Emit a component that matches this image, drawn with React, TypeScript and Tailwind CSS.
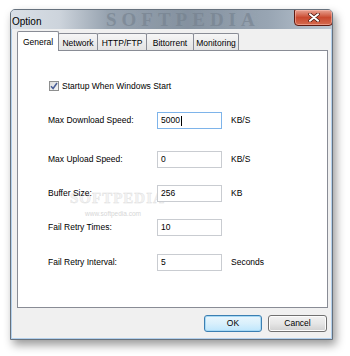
import React from "react";

const font = { fontFamily: '"Liberation Sans", Arial, sans-serif' };

function Tab({ label, active, w }: { label: string; active?: boolean; w: string }) {
  if (active) {
    return (
      <div
        className={`${w} h-[20px] -mb-[1px] relative z-10 flex items-start justify-center pt-[4px] border border-b-0 border-[#898c95] bg-white text-[8.5px] text-black rounded-t-[2px]`}
      >
        {label}
      </div>
    );
  }
  return (
    <div
      className={`${w} h-[17px] -ml-[1px] flex items-start justify-center pt-[3px] border border-b-0 border-[#898c95] bg-gradient-to-b from-[#f6f6f6] to-[#e3e3e3] text-[8.5px] text-black rounded-t-[2px]`}
    >
      {label}
    </div>
  );
}

function Field({ value, focused }: { value: string; focused?: boolean }) {
  return (
    <div
      className={`w-[65px] h-[17px] flex items-center pl-[3px] bg-white border text-[8.5px] text-black ${
        focused ? "border-[#7eb4ea]" : "border-[#c9ccd1]"
      }`}
    >
      {value}
      {focused && <span className="inline-block w-[1px] h-[10px] bg-black ml-[1px]" />}
    </div>
  );
}

function Row({ label, value, unit, focused, mt }: { label: string; value: string; unit?: string; focused?: boolean; mt: string }) {
  return (
    <div className={`${mt} relative z-10 flex items-center h-[17px]`}>
      <div className="w-[109px] text-[8.5px] text-black">{label}</div>
      <Field value={value} focused={focused} />
      {unit && <div className="ml-[9px] text-[8.5px] text-black">{unit}</div>}
    </div>
  );
}

function Button({ label, def, w }: { label: string; def?: boolean; w: string }) {
  return (
    <div
      className={`${w} h-[17px] flex items-center justify-center rounded-[3px] border text-[8.5px] text-black ${
        def
          ? "border-[#3c7fb1] bg-gradient-to-b from-[#eaf6fd] via-[#d9f0fc] to-[#bee6fd] shadow-[inset_0_0_0_1px_#a7d9f5]"
          : "border-[#707070] bg-gradient-to-b from-[#f2f2f2] via-[#e6e6e6] to-[#d0d0d0] shadow-[inset_0_0_0_1px_#fcfcfc]"
      }`}
    >
      {label}
    </div>
  );
}

export default function App() {
  return (
    <div className="w-[350px] h-[356px] bg-white pt-[9px] pl-[10px] overflow-hidden" style={font}>
      <div className="relative w-[323px] h-[331px] flex flex-col rounded-t-[5px] border border-[#66717d] bg-[#b3d0ec] shadow-[3px_5px_10px_rgba(0,0,0,0.4)]">
        {/* title bar */}
        <div className="relative h-[19px] flex items-start justify-between rounded-t-[4px] overflow-hidden bg-[linear-gradient(90deg,#d9dfe6_0%,#cdd4dc_15%,#97a3b0_30%,#8592a0_55%,#98a5b3_80%,#bcc7d2_100%)]">
          <div className="absolute left-[95px] top-[0px] leading-none text-[19px] font-bold tracking-[5px] text-[#737f8c] opacity-60 select-none" style={{ fontFamily: '"Liberation Serif", serif' }}>
            SOFTPEDIA
          </div>
          <div className="relative pl-[1px] pt-[4px] text-[10px] text-black">Option</div>
          <div className="relative -mt-[1px] -mr-[1px] w-[39px] h-[17px] flex items-center justify-center rounded-b-[4px] rounded-t-[2px] border border-[#5e1a10] bg-gradient-to-b from-[#e7a292] via-[#c9492f] to-[#d46a4e] shadow-[inset_0_0_0_1px_rgba(255,200,190,0.5)]">
            <svg width="12" height="9" viewBox="0 0 12 9">
              <path d="M2 1.2 L10 7.8 M10 1.2 L2 7.8" stroke="#4a1a12" strokeWidth="3.4" strokeLinecap="round" />
              <path d="M2 1.2 L10 7.8 M10 1.2 L2 7.8" stroke="#ffffff" strokeWidth="2" strokeLinecap="round" />
            </svg>
          </div>
        </div>

        {/* client */}
        <div className="flex-1 mx-[1px] mb-[1px] bg-[#f0f0f0] flex flex-col pt-[2px] pl-[5px] pr-[3px]">
          <div className="h-[19px] flex items-end">
            <Tab label="General" active w="w-[42px]" />
            <Tab label="Network" w="w-[40px]" />
            <Tab label="HTTP/FTP" w="w-[50px]" />
            <Tab label="Bittorrent" w="w-[48px]" />
            <Tab label="Monitoring" w="w-[46px]" />
          </div>
          <div className="relative w-[311px] h-[258px] border border-[#898c95] bg-white flex flex-col pl-[30px]">
            {/* watermark, behind the rows */}
            <div className="absolute left-[52px] top-[136px] text-[15px] font-bold tracking-[1px] text-[#f4f4f4] select-none" style={{ fontFamily: '"Liberation Serif", serif', WebkitTextStroke: "0.4px #e0e0e0" }}>
              SOFTPEDIA
            </div>
            <div className="absolute left-[67px] top-[158px] text-[6.5px] text-[#d6d6d6] select-none">www.softpedia.com</div>

            <div className="mt-[29px] h-[12px] flex items-center">
              <div className="ml-[1px] w-[10px] h-[10px] border border-[#8e8f8f] bg-gradient-to-br from-[#dcdcdc] to-[#f6f6f6] flex items-center justify-center">
                <svg width="8" height="8" viewBox="0 0 8 8">
                  <path d="M1 4.2 L3.1 6.5 L7 1" fill="none" stroke="#4a5f97" strokeWidth="1.5" />
                </svg>
              </div>
              <div className="ml-[3px] text-[8.5px] text-black">Startup When Windows Start</div>
            </div>
            <Row mt="mt-[20px]" label="Max Download Speed:" value="5000" unit="KB/S" focused />
            <Row mt="mt-[22px]" label="Max Upload Speed:" value="0" unit="KB/S" />
            <Row mt="mt-[17px]" label="Buffer Size:" value="256" unit="KB" />
            <Row mt="mt-[17px]" label="Fail Retry Times:" value="10" />
            <Row mt="mt-[18px]" label="Fail Retry Interval:" value="5" unit="Seconds" />
          </div>
          <div className="mt-[7px] flex justify-end gap-[6px] pr-[1px]">
            <Button label="OK" def w="w-[58px]" />
            <Button label="Cancel" w="w-[59px]" />
          </div>
        </div>
      </div>
    </div>
  );
}
